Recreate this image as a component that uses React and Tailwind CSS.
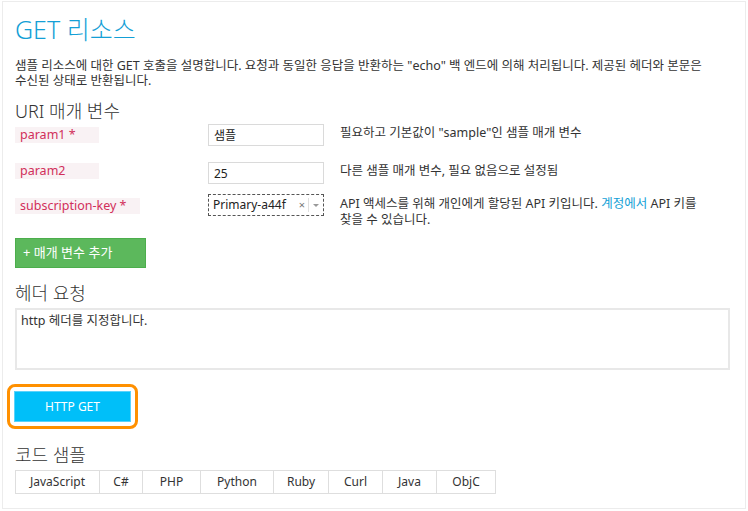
import { useState } from "react";

const FONT = { fontFamily: '"Noto Sans", "Noto Sans CJK KR", sans-serif' };

const params = [
  {
    name: "param1 *",
    value: "샘플",
    desc: '필요하고 기본값이 "sample"인 샘플 매개 변수',
    labelW: "w-[84px]",
  },
  {
    name: "param2",
    value: "25",
    desc: "다른 샘플 매개 변수, 필요 없음으로 설정됨",
    labelW: "w-[84px]",
  },
];

const tabs = ["JavaScript", "C#", "PHP", "Python", "Ruby", "Curl", "Java", "ObjC"];
const tabWidths = ["w-[85px]", "w-[44px]", "w-[59px]", "w-[74px]", "w-[56px]", "w-[55px]", "w-[55px]", "w-[60px]"];

function ParamLabel({ children, width, className = "" }) {
  return (
    <div className={`w-[193px] shrink-0 ${className}`}>
      <div className={`${width} h-[16px] bg-[#f9f2f4] text-[#d12f5a] text-[12.5px] leading-[16px] pl-[5px] whitespace-nowrap`}>
        {children}
      </div>
    </div>
  );
}

export default function App() {
  const [tab, setTab] = useState("");

  return (
    <div className="w-[748px] h-[511px] bg-white text-[#333]" style={FONT}>
      <div className="ml-[2px] mt-[1px] w-[744px] h-[508px] border border-[#ececec] pl-[12px] pr-[14px] pt-[11px]">
        <h1 className="text-[25px] leading-[32px] font-light text-[#149fd6]">GET 리소스</h1>

        <p className="mt-[13px] text-[12.5px] leading-[15px]">
          샘플 리소스에 대한 GET 호출을 설명합니다. 요청과 동일한 응답을 반환하는 "echo" 백 엔드에 의해 처리됩니다. 제공된 헤더와 본문은
          <br />
          수신된 상태로 반환됩니다.
        </p>

        <h2 className="mt-[12px] text-[18px] leading-[22px] font-light">URI 매개 변수</h2>

        <div className="mt-[2px] flex flex-col">
          {params.map((p, i) => (
            <div key={p.name} className={`flex items-start ${i === 1 ? "mt-[16px]" : ""}`}>
              <ParamLabel width={p.labelW} className={i === 0 ? "mt-[3px]" : "mt-[1px]"}>
                {p.name}
              </ParamLabel>
              <input
                readOnly
                value={p.value}
                className="w-[116px] h-[22px] shrink-0 border border-[#dadada] px-[5px] text-[12px] text-[#222] outline-none"
                style={FONT}
              />
              <div className="ml-[16px] mt-[1px] text-[12.5px] leading-[15px]">{p.desc}</div>
            </div>
          ))}

          <div className="mt-[10px] flex items-start">
            <ParamLabel width="w-[125px]" className="mt-[4px]">
              subscription-key *
            </ParamLabel>
            <div className="w-[116px] h-[22px] shrink-0 border border-dashed border-[#555] flex items-center pl-[4px] text-[12px] text-[#222]">
              <span className="flex-1">Primary-a44f</span>
              <span className="text-[11px] text-[#777] mr-[3px]">×</span>
              <span className="w-px h-[14px] bg-[#e0e0e0]" />
              <svg width="12" height="10" viewBox="0 0 12 10" className="mx-[1px]">
                <path d="M3 4 L9 4 L6 7 Z" fill="#999" />
              </svg>
            </div>
            <div className="ml-[16px] mt-[2px] text-[12.5px] leading-[16px]">
              API 액세스를 위해 개인에게 할당된 API 키입니다. <span className="text-[#149fd6]">계정에서</span> API 키를
              <br />
              찾을 수 있습니다.
            </div>
          </div>
        </div>

        <button
          type="button"
          className="mt-[10px] w-[131px] h-[30px] bg-[#5cb85c] border border-[#4cae4c] text-white text-[13px] flex items-center pl-[7px]"
          style={FONT}
        >
          + 매개 변수 추가
        </button>

        <h2 className="mt-[14px] text-[18px] leading-[22px] font-light">헤더 요청</h2>

        <div className="mt-[4px] w-[715px] h-[62px] border-2 border-[#e8e8e8] px-[4px] py-[3px] text-[12.5px] leading-[16px] text-[#333]">
          http 헤더를 지정합니다.
        </div>

        <div className="mt-[14px] -ml-[8px] w-[131px] h-[45px] border-[3px] border-[#ff9000] rounded-[8px] p-[4px]">
          <button
            type="button"
            className="w-full h-full bg-[#00bff9] border border-[#5ad2fb] text-white text-[12px]"
            style={FONT}
          >
            HTTP GET
          </button>
        </div>

        <h2 className="mt-[15px] text-[18px] leading-[22px] font-light">코드 샘플</h2>

        <div className="mt-[4px] flex">
          {tabs.map((t, i) => (
            <button
              key={t}
              type="button"
              onClick={() => setTab(t)}
              className={`${tabWidths[i]} h-[24px] border border-[#dedede] ${i > 0 ? "-ml-px" : ""} text-[12px] text-[#333] ${
                tab === t ? "bg-[#f3f3f3]" : "bg-white"
              }`}
              style={FONT}
            >
              {t}
            </button>
          ))}
        </div>
      </div>
    </div>
  );
}
